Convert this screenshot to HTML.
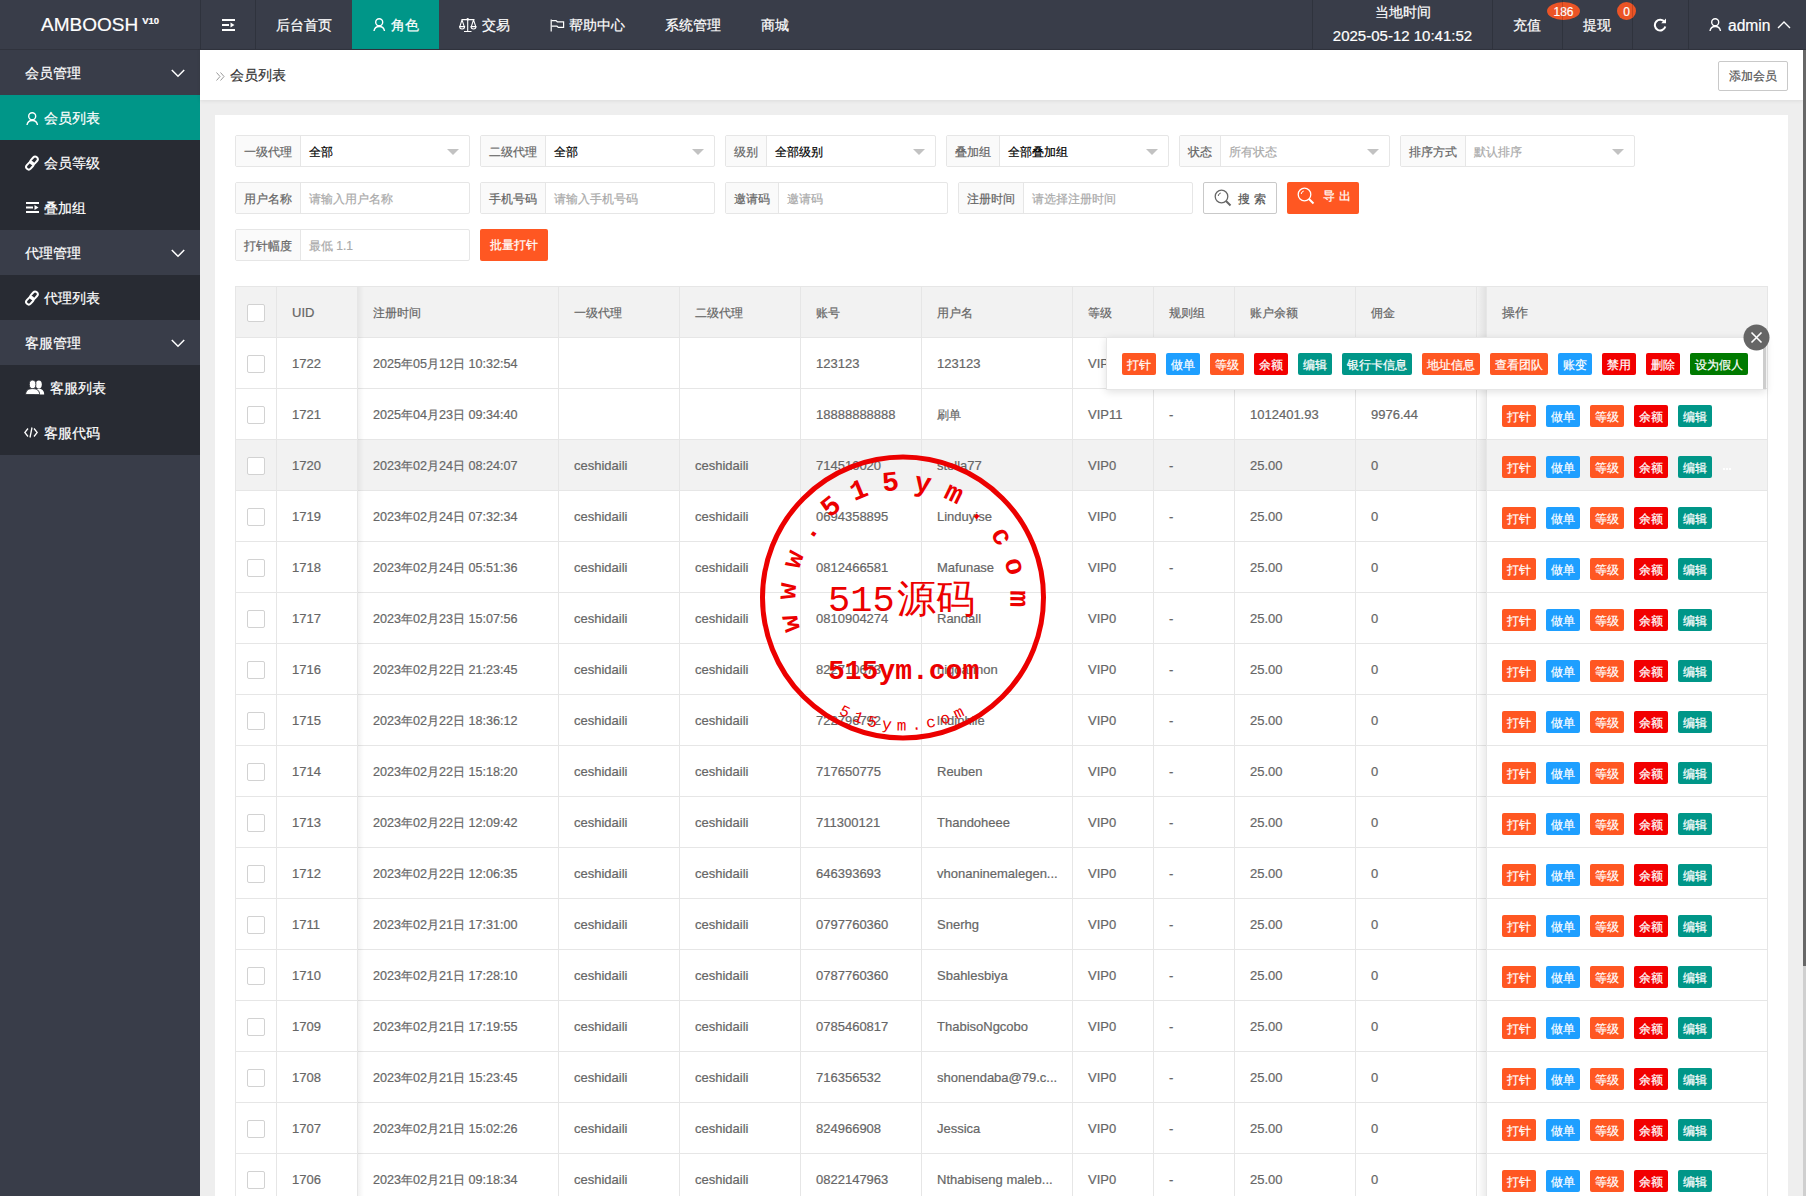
<!DOCTYPE html><html><head><meta charset="utf-8"><style>
*{box-sizing:border-box;margin:0;padding:0}
html,body{width:1806px;height:1196px;overflow:hidden}
body{position:relative;background:#eee;-webkit-text-stroke:0.2px currentColor;font-family:"Liberation Sans",sans-serif;font-size:14px;color:#333}
.abs{position:absolute}
#hdr{left:0;top:0;width:1806px;height:50px;background:#393D49;border-bottom:1px solid #30333d}
.vl{position:absolute;top:0;width:1px;height:49px;background:rgba(0,0,0,.16);z-index:2}
.nav{position:absolute;top:0;height:49px;line-height:51px;color:#fff;font-size:14px;white-space:nowrap}
.nav svg{position:absolute}
#side{left:0;top:50px;width:200px;height:1146px;background:#393D49}
.sp{position:absolute;left:0;width:200px;height:45px;line-height:47px;color:#fff;font-size:14px;padding-left:25px}
.sc{position:absolute;left:0;width:200px;height:45px;line-height:47px;color:#fff;font-size:14px;background:#282B33}
.chev{position:absolute;left:171px;top:19px}
#crumb{left:200px;top:50px;width:1603px;height:50px;background:#fff;box-shadow:0 1px 4px rgba(0,0,0,.08)}
#sb{left:1803px;top:50px;width:3px;height:1146px;background:#cfcfcf}
#sbt{left:1803px;top:50px;width:3px;height:916px;background:#676767}
#card{left:215px;top:115px;width:1573px;height:1100px;background:#fff}
.grp{position:absolute;height:32px;border:1px solid #e6e6e6;border-radius:2px;background:#fff}
.lab{position:absolute;left:0;top:0;height:30px;line-height:32px;padding:0 8px;background:#FAFAFA;border-right:1px solid #e6e6e6;color:#666;font-size:12px;white-space:nowrap}
.inp{position:absolute;top:0;height:30px;line-height:32px;padding-left:8px;font-size:12px;color:#000;white-space:nowrap}
.ph{color:#aaa}
.edge{position:absolute;right:10px;top:13px;width:0;height:0;border-left:6px solid transparent;border-right:6px solid transparent;border-top:6px solid #c2c2c2}
.btn{position:absolute;height:32px;line-height:32px;font-size:12px;text-align:center;border-radius:2px;white-space:nowrap}
#tbl{left:235px;top:286px;width:1533px;height:910px;border:1px solid #e6e6e6;border-bottom:none;overflow:hidden;background:#fff}
.row{position:absolute;left:0;width:1531px;height:51px;border-bottom:1px solid #e6e6e6}
.c{position:absolute;top:0;height:50px;line-height:52px;border-right:1px solid #e6e6e6;padding:0 15px;font-size:13px;color:#666;white-space:nowrap;overflow:hidden}
.cb{position:absolute;left:11px;top:17px;width:18px;height:18px;border:1px solid #d2d2d2;border-radius:2px;background:#fff}
.xb{position:absolute;height:22px;line-height:24px;padding:0 5px;font-size:12px;color:#fff;border-radius:2px;white-space:nowrap;text-align:center}
.o{background:#FF5722}.b{background:#1E9FFF}.r{background:#F20000}.t{background:#009688}.g{background:#007A00}
.z{font-size:12px}
</style></head><body>
<div id="hdr" class="abs">
<div class="abs" style="left:41px;top:0;height:49px;line-height:49px;color:#fff;font-size:19px;white-space:nowrap">AMBOOSH<span style="font-size:9.5px;font-weight:bold;position:relative;top:-7px;left:4px">V10</span></div>
<div class="vl" style="left:200px"></div>
<div class="vl" style="left:255px"></div>
<div class="vl" style="left:1312px"></div>
<div class="vl" style="left:1492px"></div>
<div class="vl" style="left:1562px"></div>
<div class="vl" style="left:1632px"></div>
<div class="vl" style="left:1688px"></div>
<svg class="abs" style="left:222px;top:18px" width="14" height="14" viewBox="0 0 14 14" ><rect x="0" y="1" width="13" height="2" fill="#fff"/><rect x="0" y="6" width="7" height="2" fill="#fff"/><path d="M8.5 4.5 L12.5 7 L8.5 9.5Z" fill="#fff"/><rect x="0" y="11" width="13" height="2" fill="#fff"/></svg>
<div class="nav" style="left:276px">后台首页</div>
<div class="abs" style="left:352px;top:0;width:87px;height:49px;background:#009688"></div>
<svg class="abs" style="left:373px;top:18px" width="13" height="14" viewBox="0 0 13 14" ><circle cx="6.2" cy="4.2" r="3.5" fill="none" stroke="#fff" stroke-width="1.4"/><path d="M1 13 A5.3 5.3 0 0 1 11.5 13" fill="none" stroke="#fff" stroke-width="1.4"/></svg>
<div class="nav" style="left:391px">角色</div>
<svg class="abs" style="left:459px;top:18px" width="18" height="14" viewBox="0 0 18 14" ><g fill="none" stroke="#fff" stroke-width="1.1"><path d="M2.5 1.6H15.5M8.7 1.6V13.2M5 13.5H12.5"/><path d="M3 1.9L0.9 8.4M3 1.9L5.2 8.4M14.5 1.9L12.4 8.4M14.5 1.9L16.7 8.4"/><path d="M0.6 8.6H5.6A2.5 2.4 0 0 1 0.6 8.6Z"/><path d="M12 8.6H17A2.5 2.4 0 0 1 12 8.6Z"/></g><circle cx="8.7" cy="1.3" r="1.2" fill="#fff"/></svg>
<div class="nav" style="left:482px">交易</div>
<svg class="abs" style="left:550px;top:19px" width="15" height="13" viewBox="0 0 15 13" ><g fill="none" stroke="#fff" stroke-width="1.2"><path d="M1.2 0.5V12.5"/><path d="M1.6 1.6H6L7.3 2.8H13.6V8.4H8.3L7 7.2H1.6"/></g></svg>
<div class="nav" style="left:569px">帮助中心</div>
<div class="nav" style="left:665px">系统管理</div>
<div class="nav" style="left:761px">商城</div>
<div class="abs" style="left:1313px;top:0;width:179px;text-align:center;color:#fff;font-size:14px;line-height:24px;top:0">当地时间</div>
<div class="abs" style="left:1313px;top:24px;width:179px;text-align:center;color:#fff;font-size:15px;line-height:24px">2025-05-12 10:41:52</div>
<div class="nav" style="left:1513px;top:0">充值</div>
<div class="abs" style="left:1547px;top:2px;width:33px;height:18px;line-height:20px;border-radius:50%;background:rgba(255,87,34,.9);color:#fff;font-size:12px;text-align:center">186</div>
<div class="nav" style="left:1583px">提现</div>
<div class="abs" style="left:1617px;top:2px;width:19px;height:18px;line-height:20px;border-radius:50%;background:rgba(255,87,34,.9);color:#fff;font-size:12px;text-align:center">0</div>
<svg class="abs" style="left:1653px;top:18px" width="14" height="14" viewBox="0 0 14 14" ><path d="M11.6 4.2A5.3 5.3 0 1 0 12.3 8.5" fill="none" stroke="#fff" stroke-width="2"/><path d="M8.2 5.2H13V0.4Z" fill="#fff"/></svg>
<svg class="abs" style="left:1709px;top:18px" width="13" height="14" viewBox="0 0 13 14" ><circle cx="6.2" cy="4.2" r="3.5" fill="none" stroke="#fff" stroke-width="1.4"/><path d="M1 13 A5.3 5.3 0 0 1 11.5 13" fill="none" stroke="#fff" stroke-width="1.4"/></svg>
<div class="nav" style="left:1728px;font-size:15.6px">admin</div>
<svg class="abs" style="left:1777px;top:20px" width="15" height="9" viewBox="0 0 15 9" ><path d="M1 8L7 2L13 8" fill="none" stroke="#fff" stroke-width="1.4"/></svg>
</div>
<div id="side" class="abs">
<div class="sp" style="top:0px">会员管理<svg class="chev" width="14" height="9" viewBox="0 0 14 9"><path d="M0.8 1L7 7.3L13.2 1" fill="none" stroke="#fff" stroke-width="1.5"/></svg></div>
<div class="sc" style="top:45px;background:#009688"><span style="position:absolute;left:44px">会员列表</span></div>
<svg class="abs" style="left:26px;top:62px" width="13" height="14" viewBox="0 0 13 14" ><circle cx="6.2" cy="4.2" r="3.5" fill="none" stroke="#fff" stroke-width="1.4"/><path d="M1 13 A5.3 5.3 0 0 1 11.5 13" fill="none" stroke="#fff" stroke-width="1.4"/></svg>
<div class="sc" style="top:90px;background:#282B33"><span style="position:absolute;left:44px">会员等级</span></div>
<svg class="abs" style="left:24px;top:105px" width="16" height="16" viewBox="0 0 16 16" ><g fill="none" stroke="#fff" stroke-width="2" transform="rotate(-48 8 8)"><rect x="0.3" y="5.6" width="8.4" height="5.2" rx="2.6"/><rect x="7.1" y="5.2" width="8.4" height="5.2" rx="2.6"/></g></svg>
<div class="sc" style="top:135px;background:#282B33"><span style="position:absolute;left:44px">叠加组</span></div>
<svg class="abs" style="left:26px;top:151px" width="13" height="13" viewBox="0 0 13 13" ><rect x="0" y="1" width="13" height="2" fill="#fff"/><rect x="0" y="5.5" width="7" height="2" fill="#fff"/><path d="M8.5 4L12.5 6.5L8.5 9Z" fill="#fff"/><rect x="0" y="10" width="13" height="2" fill="#fff"/></svg>
<div class="sp" style="top:180px">代理管理<svg class="chev" width="14" height="9" viewBox="0 0 14 9"><path d="M0.8 1L7 7.3L13.2 1" fill="none" stroke="#fff" stroke-width="1.5"/></svg></div>
<div class="sc" style="top:225px;background:#282B33"><span style="position:absolute;left:44px">代理列表</span></div>
<svg class="abs" style="left:24px;top:240px" width="16" height="16" viewBox="0 0 16 16" ><g fill="none" stroke="#fff" stroke-width="2" transform="rotate(-48 8 8)"><rect x="0.3" y="5.6" width="8.4" height="5.2" rx="2.6"/><rect x="7.1" y="5.2" width="8.4" height="5.2" rx="2.6"/></g></svg>
<div class="sp" style="top:270px">客服管理<svg class="chev" width="14" height="9" viewBox="0 0 14 9"><path d="M0.8 1L7 7.3L13.2 1" fill="none" stroke="#fff" stroke-width="1.5"/></svg></div>
<div class="sc" style="top:315px;background:#282B33"><span style="position:absolute;left:50px">客服列表</span></div>
<svg class="abs" style="left:25px;top:330px" width="20" height="16" viewBox="0 0 20 16" ><g fill="#fff"><ellipse cx="13.8" cy="4.6" rx="3" ry="4"/><path d="M9.5 14.5C9.5 10.5 11.5 8.8 14 8.8S19.2 10.5 19.2 14.5Z"/></g><g fill="#fff" stroke="#282B33" stroke-width="0.9"><ellipse cx="7.6" cy="4.4" rx="3.3" ry="4.3"/><path d="M0.6 14.6C0.6 10.6 3.2 8.6 7.6 8.6S14.6 10.6 14.6 14.6Z"/></g></svg>
<div class="sc" style="top:360px;background:#282B33"><span style="position:absolute;left:44px">客服代码</span></div>
<svg class="abs" style="left:24px;top:377px" width="14" height="11" viewBox="0 0 14 11" ><g fill="none" stroke="#fff" stroke-width="1.3"><path d="M4 1.5L0.8 5.5L4 9.5M10 1.5L13.2 5.5L10 9.5M8 0.5L6 10.5"/></g></svg>
</div>
<div id="crumb" class="abs">
<svg class="abs" style="left:16px;top:22px" width="9" height="9" viewBox="0 0 9 9" ><path d="M0.5 0.5L4 4.5L0.5 8.5M4.5 0.5L8 4.5L4.5 8.5" fill="none" stroke="#999" stroke-width="1"/></svg>
<div class="abs" style="left:30px;top:0;line-height:50px;font-size:14px;color:#333">会员列表</div>
<div class="abs" style="left:1518px;top:11px;width:70px;height:30px;line-height:28px;border:1px solid #C9C9C9;border-radius:2px;background:#fff;color:#555;font-size:12px;text-align:center">添加会员</div>
</div>
<div id="sb" class="abs"></div><div id="sbt" class="abs"></div>
<div id="card" class="abs"></div>
<div class="grp" style="left:235px;top:135px;width:235px"><div class="lab" style="width:65px">一级代理</div><div class="inp" style="left:65px">全部</div><i class="edge"></i></div>
<div class="grp" style="left:480px;top:135px;width:235px"><div class="lab" style="width:65px">二级代理</div><div class="inp" style="left:65px">全部</div><i class="edge"></i></div>
<div class="grp" style="left:725px;top:135px;width:211px"><div class="lab" style="width:41px">级别</div><div class="inp" style="left:41px">全部级别</div><i class="edge"></i></div>
<div class="grp" style="left:946px;top:135px;width:223px"><div class="lab" style="width:53px">叠加组</div><div class="inp" style="left:53px">全部叠加组</div><i class="edge"></i></div>
<div class="grp" style="left:1179px;top:135px;width:211px"><div class="lab" style="width:41px">状态</div><div class="inp ph" style="left:41px">所有状态</div><i class="edge"></i></div>
<div class="grp" style="left:1400px;top:135px;width:235px"><div class="lab" style="width:65px">排序方式</div><div class="inp ph" style="left:65px">默认排序</div><i class="edge"></i></div>
<div class="grp" style="left:235px;top:182px;width:235px"><div class="lab" style="width:65px">用户名称</div><div class="inp ph" style="left:65px">请输入用户名称</div></div>
<div class="grp" style="left:480px;top:182px;width:235px"><div class="lab" style="width:65px">手机号码</div><div class="inp ph" style="left:65px">请输入手机号码</div></div>
<div class="grp" style="left:725px;top:182px;width:223px"><div class="lab" style="width:53px">邀请码</div><div class="inp ph" style="left:53px">邀请码</div></div>
<div class="grp" style="left:958px;top:182px;width:235px"><div class="lab" style="width:65px">注册时间</div><div class="inp ph" style="left:65px">请选择注册时间</div></div>
<div class="grp" style="left:235px;top:229px;width:235px"><div class="lab" style="width:65px">打针幅度</div><div class="inp ph" style="left:65px">最低 1.1</div></div>
<div class="btn" style="left:1203px;top:182px;width:74px;border:1px solid #C9C9C9;background:#fff;color:#555"><span style="position:absolute;left:34px;top:0;letter-spacing:4px">搜索</span></div>
<svg class="abs" style="left:1214px;top:189px" width="18" height="18" viewBox="0 0 18 18" ><circle cx="7.5" cy="7.5" r="6.3" fill="none" stroke="#666" stroke-width="1.3"/><path d="M4.2 7A3.4 3.4 0 0 1 6.8 4" fill="none" stroke="#666" stroke-width="1"/><path d="M12 12L16.5 16.5" stroke="#666" stroke-width="2"/></svg>
<div class="btn" style="left:1287px;top:182px;width:72px;background:#FF5722;color:#fff"><span style="position:absolute;left:36px;top:-2px;letter-spacing:4px">导出</span></div>
<svg class="abs" style="left:1297px;top:187px" width="18" height="18" viewBox="0 0 18 18" ><circle cx="7.5" cy="7.5" r="6.3" fill="none" stroke="#fff" stroke-width="1.3"/><path d="M4.2 7A3.4 3.4 0 0 1 6.8 4" fill="none" stroke="#fff" stroke-width="1"/><path d="M12 12L16.5 16.5" stroke="#fff" stroke-width="2"/></svg>
<div class="btn" style="left:480px;top:229px;width:68px;background:#FF5722;color:#fff">批量打针</div>
<div id="tbl" class="abs">
<div class="row" style="top:0px;background:#F2F2F2"><div class="c" style="left:0px;width:41px"><i class="cb"></i></div><div class="c" style="left:41px;width:81px">UID</div><div class="c" style="left:122px;width:201px"><span class="z">注册时间</span></div><div class="c" style="left:323px;width:121px"><span class="z">一级代理</span></div><div class="c" style="left:444px;width:121px"><span class="z">二级代理</span></div><div class="c" style="left:565px;width:121px"><span class="z">账号</span></div><div class="c" style="left:686px;width:151px"><span class="z">用户名</span></div><div class="c" style="left:837px;width:81px"><span class="z">等级</span></div><div class="c" style="left:918px;width:81px"><span class="z">规则组</span></div><div class="c" style="left:999px;width:121px"><span class="z">账户余额</span></div><div class="c" style="left:1120px;width:121px"><span class="z">佣金</span></div><div class="c" style="left:1241px;width:20px;border-right:none"></div></div>
<div class="row" style="top:51px;background:#fff"><div class="c" style="left:0px;width:41px"><i class="cb"></i></div><div class="c" style="left:41px;width:81px">1722</div><div class="c" style="left:122px;width:201px;font-size:12.6px">2025<span class="z">年</span>05<span class="z">月</span>12<span class="z">日</span> 10:32:54</div><div class="c" style="left:323px;width:121px"></div><div class="c" style="left:444px;width:121px"></div><div class="c" style="left:565px;width:121px">123123</div><div class="c" style="left:686px;width:151px">123123</div><div class="c" style="left:837px;width:81px">VIP0</div><div class="c" style="left:918px;width:81px">-</div><div class="c" style="left:999px;width:121px">0.00</div><div class="c" style="left:1120px;width:121px">0</div><div class="c" style="left:1241px;width:20px;border-right:none"></div></div>
<div class="row" style="top:102px;background:#fff"><div class="c" style="left:0px;width:41px"><i class="cb"></i></div><div class="c" style="left:41px;width:81px">1721</div><div class="c" style="left:122px;width:201px;font-size:12.6px">2025<span class="z">年</span>04<span class="z">月</span>23<span class="z">日</span> 09:34:40</div><div class="c" style="left:323px;width:121px"></div><div class="c" style="left:444px;width:121px"></div><div class="c" style="left:565px;width:121px">18888888888</div><div class="c" style="left:686px;width:151px"><span class="z">刷单</span></div><div class="c" style="left:837px;width:81px">VIP11</div><div class="c" style="left:918px;width:81px">-</div><div class="c" style="left:999px;width:121px">1012401.93</div><div class="c" style="left:1120px;width:121px">9976.44</div><div class="c" style="left:1241px;width:20px;border-right:none"></div></div>
<div class="row" style="top:153px;background:#F2F2F2"><div class="c" style="left:0px;width:41px"><i class="cb"></i></div><div class="c" style="left:41px;width:81px">1720</div><div class="c" style="left:122px;width:201px;font-size:12.6px">2023<span class="z">年</span>02<span class="z">月</span>24<span class="z">日</span> 08:24:07</div><div class="c" style="left:323px;width:121px">ceshidaili</div><div class="c" style="left:444px;width:121px">ceshidaili</div><div class="c" style="left:565px;width:121px">714510020</div><div class="c" style="left:686px;width:151px">stella77</div><div class="c" style="left:837px;width:81px">VIP0</div><div class="c" style="left:918px;width:81px">-</div><div class="c" style="left:999px;width:121px">25.00</div><div class="c" style="left:1120px;width:121px">0</div><div class="c" style="left:1241px;width:20px;border-right:none"></div></div>
<div class="row" style="top:204px;background:#fff"><div class="c" style="left:0px;width:41px"><i class="cb"></i></div><div class="c" style="left:41px;width:81px">1719</div><div class="c" style="left:122px;width:201px;font-size:12.6px">2023<span class="z">年</span>02<span class="z">月</span>24<span class="z">日</span> 07:32:34</div><div class="c" style="left:323px;width:121px">ceshidaili</div><div class="c" style="left:444px;width:121px">ceshidaili</div><div class="c" style="left:565px;width:121px">0694358895</div><div class="c" style="left:686px;width:151px">Linduyise</div><div class="c" style="left:837px;width:81px">VIP0</div><div class="c" style="left:918px;width:81px">-</div><div class="c" style="left:999px;width:121px">25.00</div><div class="c" style="left:1120px;width:121px">0</div><div class="c" style="left:1241px;width:20px;border-right:none"></div></div>
<div class="row" style="top:255px;background:#fff"><div class="c" style="left:0px;width:41px"><i class="cb"></i></div><div class="c" style="left:41px;width:81px">1718</div><div class="c" style="left:122px;width:201px;font-size:12.6px">2023<span class="z">年</span>02<span class="z">月</span>24<span class="z">日</span> 05:51:36</div><div class="c" style="left:323px;width:121px">ceshidaili</div><div class="c" style="left:444px;width:121px">ceshidaili</div><div class="c" style="left:565px;width:121px">0812466581</div><div class="c" style="left:686px;width:151px">Mafunase</div><div class="c" style="left:837px;width:81px">VIP0</div><div class="c" style="left:918px;width:81px">-</div><div class="c" style="left:999px;width:121px">25.00</div><div class="c" style="left:1120px;width:121px">0</div><div class="c" style="left:1241px;width:20px;border-right:none"></div></div>
<div class="row" style="top:306px;background:#fff"><div class="c" style="left:0px;width:41px"><i class="cb"></i></div><div class="c" style="left:41px;width:81px">1717</div><div class="c" style="left:122px;width:201px;font-size:12.6px">2023<span class="z">年</span>02<span class="z">月</span>23<span class="z">日</span> 15:07:56</div><div class="c" style="left:323px;width:121px">ceshidaili</div><div class="c" style="left:444px;width:121px">ceshidaili</div><div class="c" style="left:565px;width:121px">0810904274</div><div class="c" style="left:686px;width:151px">Randall</div><div class="c" style="left:837px;width:81px">VIP0</div><div class="c" style="left:918px;width:81px">-</div><div class="c" style="left:999px;width:121px">25.00</div><div class="c" style="left:1120px;width:121px">0</div><div class="c" style="left:1241px;width:20px;border-right:none"></div></div>
<div class="row" style="top:357px;background:#fff"><div class="c" style="left:0px;width:41px"><i class="cb"></i></div><div class="c" style="left:41px;width:81px">1716</div><div class="c" style="left:122px;width:201px;font-size:12.6px">2023<span class="z">年</span>02<span class="z">月</span>22<span class="z">日</span> 21:23:45</div><div class="c" style="left:323px;width:121px">ceshidaili</div><div class="c" style="left:444px;width:121px">ceshidaili</div><div class="c" style="left:565px;width:121px">822710673</div><div class="c" style="left:686px;width:151px">nigoannon</div><div class="c" style="left:837px;width:81px">VIP0</div><div class="c" style="left:918px;width:81px">-</div><div class="c" style="left:999px;width:121px">25.00</div><div class="c" style="left:1120px;width:121px">0</div><div class="c" style="left:1241px;width:20px;border-right:none"></div></div>
<div class="row" style="top:408px;background:#fff"><div class="c" style="left:0px;width:41px"><i class="cb"></i></div><div class="c" style="left:41px;width:81px">1715</div><div class="c" style="left:122px;width:201px;font-size:12.6px">2023<span class="z">年</span>02<span class="z">月</span>22<span class="z">日</span> 18:36:12</div><div class="c" style="left:323px;width:121px">ceshidaili</div><div class="c" style="left:444px;width:121px">ceshidaili</div><div class="c" style="left:565px;width:121px">722796792</div><div class="c" style="left:686px;width:151px">lndiphile</div><div class="c" style="left:837px;width:81px">VIP0</div><div class="c" style="left:918px;width:81px">-</div><div class="c" style="left:999px;width:121px">25.00</div><div class="c" style="left:1120px;width:121px">0</div><div class="c" style="left:1241px;width:20px;border-right:none"></div></div>
<div class="row" style="top:459px;background:#fff"><div class="c" style="left:0px;width:41px"><i class="cb"></i></div><div class="c" style="left:41px;width:81px">1714</div><div class="c" style="left:122px;width:201px;font-size:12.6px">2023<span class="z">年</span>02<span class="z">月</span>22<span class="z">日</span> 15:18:20</div><div class="c" style="left:323px;width:121px">ceshidaili</div><div class="c" style="left:444px;width:121px">ceshidaili</div><div class="c" style="left:565px;width:121px">717650775</div><div class="c" style="left:686px;width:151px">Reuben</div><div class="c" style="left:837px;width:81px">VIP0</div><div class="c" style="left:918px;width:81px">-</div><div class="c" style="left:999px;width:121px">25.00</div><div class="c" style="left:1120px;width:121px">0</div><div class="c" style="left:1241px;width:20px;border-right:none"></div></div>
<div class="row" style="top:510px;background:#fff"><div class="c" style="left:0px;width:41px"><i class="cb"></i></div><div class="c" style="left:41px;width:81px">1713</div><div class="c" style="left:122px;width:201px;font-size:12.6px">2023<span class="z">年</span>02<span class="z">月</span>22<span class="z">日</span> 12:09:42</div><div class="c" style="left:323px;width:121px">ceshidaili</div><div class="c" style="left:444px;width:121px">ceshidaili</div><div class="c" style="left:565px;width:121px">711300121</div><div class="c" style="left:686px;width:151px">Thandoheee</div><div class="c" style="left:837px;width:81px">VIP0</div><div class="c" style="left:918px;width:81px">-</div><div class="c" style="left:999px;width:121px">25.00</div><div class="c" style="left:1120px;width:121px">0</div><div class="c" style="left:1241px;width:20px;border-right:none"></div></div>
<div class="row" style="top:561px;background:#fff"><div class="c" style="left:0px;width:41px"><i class="cb"></i></div><div class="c" style="left:41px;width:81px">1712</div><div class="c" style="left:122px;width:201px;font-size:12.6px">2023<span class="z">年</span>02<span class="z">月</span>22<span class="z">日</span> 12:06:35</div><div class="c" style="left:323px;width:121px">ceshidaili</div><div class="c" style="left:444px;width:121px">ceshidaili</div><div class="c" style="left:565px;width:121px">646393693</div><div class="c" style="left:686px;width:151px">vhonaninemalegen...</div><div class="c" style="left:837px;width:81px">VIP0</div><div class="c" style="left:918px;width:81px">-</div><div class="c" style="left:999px;width:121px">25.00</div><div class="c" style="left:1120px;width:121px">0</div><div class="c" style="left:1241px;width:20px;border-right:none"></div></div>
<div class="row" style="top:612px;background:#fff"><div class="c" style="left:0px;width:41px"><i class="cb"></i></div><div class="c" style="left:41px;width:81px">1711</div><div class="c" style="left:122px;width:201px;font-size:12.6px">2023<span class="z">年</span>02<span class="z">月</span>21<span class="z">日</span> 17:31:00</div><div class="c" style="left:323px;width:121px">ceshidaili</div><div class="c" style="left:444px;width:121px">ceshidaili</div><div class="c" style="left:565px;width:121px">0797760360</div><div class="c" style="left:686px;width:151px">Snerhg</div><div class="c" style="left:837px;width:81px">VIP0</div><div class="c" style="left:918px;width:81px">-</div><div class="c" style="left:999px;width:121px">25.00</div><div class="c" style="left:1120px;width:121px">0</div><div class="c" style="left:1241px;width:20px;border-right:none"></div></div>
<div class="row" style="top:663px;background:#fff"><div class="c" style="left:0px;width:41px"><i class="cb"></i></div><div class="c" style="left:41px;width:81px">1710</div><div class="c" style="left:122px;width:201px;font-size:12.6px">2023<span class="z">年</span>02<span class="z">月</span>21<span class="z">日</span> 17:28:10</div><div class="c" style="left:323px;width:121px">ceshidaili</div><div class="c" style="left:444px;width:121px">ceshidaili</div><div class="c" style="left:565px;width:121px">0787760360</div><div class="c" style="left:686px;width:151px">Sbahlesbiya</div><div class="c" style="left:837px;width:81px">VIP0</div><div class="c" style="left:918px;width:81px">-</div><div class="c" style="left:999px;width:121px">25.00</div><div class="c" style="left:1120px;width:121px">0</div><div class="c" style="left:1241px;width:20px;border-right:none"></div></div>
<div class="row" style="top:714px;background:#fff"><div class="c" style="left:0px;width:41px"><i class="cb"></i></div><div class="c" style="left:41px;width:81px">1709</div><div class="c" style="left:122px;width:201px;font-size:12.6px">2023<span class="z">年</span>02<span class="z">月</span>21<span class="z">日</span> 17:19:55</div><div class="c" style="left:323px;width:121px">ceshidaili</div><div class="c" style="left:444px;width:121px">ceshidaili</div><div class="c" style="left:565px;width:121px">0785460817</div><div class="c" style="left:686px;width:151px">ThabisoNgcobo</div><div class="c" style="left:837px;width:81px">VIP0</div><div class="c" style="left:918px;width:81px">-</div><div class="c" style="left:999px;width:121px">25.00</div><div class="c" style="left:1120px;width:121px">0</div><div class="c" style="left:1241px;width:20px;border-right:none"></div></div>
<div class="row" style="top:765px;background:#fff"><div class="c" style="left:0px;width:41px"><i class="cb"></i></div><div class="c" style="left:41px;width:81px">1708</div><div class="c" style="left:122px;width:201px;font-size:12.6px">2023<span class="z">年</span>02<span class="z">月</span>21<span class="z">日</span> 15:23:45</div><div class="c" style="left:323px;width:121px">ceshidaili</div><div class="c" style="left:444px;width:121px">ceshidaili</div><div class="c" style="left:565px;width:121px">716356532</div><div class="c" style="left:686px;width:151px">shonendaba@79.c...</div><div class="c" style="left:837px;width:81px">VIP0</div><div class="c" style="left:918px;width:81px">-</div><div class="c" style="left:999px;width:121px">25.00</div><div class="c" style="left:1120px;width:121px">0</div><div class="c" style="left:1241px;width:20px;border-right:none"></div></div>
<div class="row" style="top:816px;background:#fff"><div class="c" style="left:0px;width:41px"><i class="cb"></i></div><div class="c" style="left:41px;width:81px">1707</div><div class="c" style="left:122px;width:201px;font-size:12.6px">2023<span class="z">年</span>02<span class="z">月</span>21<span class="z">日</span> 15:02:26</div><div class="c" style="left:323px;width:121px">ceshidaili</div><div class="c" style="left:444px;width:121px">ceshidaili</div><div class="c" style="left:565px;width:121px">824966908</div><div class="c" style="left:686px;width:151px">Jessica</div><div class="c" style="left:837px;width:81px">VIP0</div><div class="c" style="left:918px;width:81px">-</div><div class="c" style="left:999px;width:121px">25.00</div><div class="c" style="left:1120px;width:121px">0</div><div class="c" style="left:1241px;width:20px;border-right:none"></div></div>
<div class="row" style="top:867px;background:#fff"><div class="c" style="left:0px;width:41px"><i class="cb"></i></div><div class="c" style="left:41px;width:81px">1706</div><div class="c" style="left:122px;width:201px;font-size:12.6px">2023<span class="z">年</span>02<span class="z">月</span>21<span class="z">日</span> 09:18:34</div><div class="c" style="left:323px;width:121px">ceshidaili</div><div class="c" style="left:444px;width:121px">ceshidaili</div><div class="c" style="left:565px;width:121px">0822147963</div><div class="c" style="left:686px;width:151px">Nthabiseng maleb...</div><div class="c" style="left:837px;width:81px">VIP0</div><div class="c" style="left:918px;width:81px">-</div><div class="c" style="left:999px;width:121px">25.00</div><div class="c" style="left:1120px;width:121px">0</div><div class="c" style="left:1241px;width:20px;border-right:none"></div></div>
<div class="abs" style="left:122px;top:0;width:6px;height:910px;background:linear-gradient(to right,rgba(0,0,0,.05),rgba(0,0,0,0))"></div>
<div class="abs" style="left:1241px;top:0;width:9px;height:910px;background:linear-gradient(to left,rgba(0,0,0,.07),rgba(0,0,0,0))"></div>
<div class="abs" style="left:1250px;top:0;width:281px;height:910px;border-left:1px solid #e6e6e6;background:#fff">
<div class="c" style="left:0;top:0;width:280px;height:50px;border-right:none;border-bottom:1px solid #e6e6e6;background:#F2F2F2;height:51px">操作</div>
<div class="abs" style="left:0;top:51px;width:280px;height:51px;border-bottom:1px solid #e6e6e6;background:#fff"><span class="xb o" style="left:15px;top:16px;width:34px">打针</span><span class="xb b" style="left:59px;top:16px;width:34px">做单</span><span class="xb o" style="left:103px;top:16px;width:34px">等级</span><span class="xb r" style="left:147px;top:16px;width:34px">余额</span><span class="xb t" style="left:191px;top:16px;width:34px">编辑</span></div>
<div class="abs" style="left:0;top:102px;width:280px;height:51px;border-bottom:1px solid #e6e6e6;background:#fff"><span class="xb o" style="left:15px;top:16px;width:34px">打针</span><span class="xb b" style="left:59px;top:16px;width:34px">做单</span><span class="xb o" style="left:103px;top:16px;width:34px">等级</span><span class="xb r" style="left:147px;top:16px;width:34px">余额</span><span class="xb t" style="left:191px;top:16px;width:34px">编辑</span></div>
<div class="abs" style="left:0;top:153px;width:280px;height:51px;border-bottom:1px solid #e6e6e6;background:#F2F2F2"><span class="xb o" style="left:15px;top:16px;width:34px">打针</span><span class="xb b" style="left:59px;top:16px;width:34px">做单</span><span class="xb o" style="left:103px;top:16px;width:34px">等级</span><span class="xb r" style="left:147px;top:16px;width:34px">余额</span><span class="xb t" style="left:191px;top:16px;width:34px">编辑</span><i class="abs" style="left:236.0px;top:28px;width:2px;height:2px;background:#fff"></i><i class="abs" style="left:239.2px;top:28px;width:2px;height:2px;background:#fff"></i><i class="abs" style="left:242.4px;top:28px;width:2px;height:2px;background:#fff"></i></div>
<div class="abs" style="left:0;top:204px;width:280px;height:51px;border-bottom:1px solid #e6e6e6;background:#fff"><span class="xb o" style="left:15px;top:16px;width:34px">打针</span><span class="xb b" style="left:59px;top:16px;width:34px">做单</span><span class="xb o" style="left:103px;top:16px;width:34px">等级</span><span class="xb r" style="left:147px;top:16px;width:34px">余额</span><span class="xb t" style="left:191px;top:16px;width:34px">编辑</span></div>
<div class="abs" style="left:0;top:255px;width:280px;height:51px;border-bottom:1px solid #e6e6e6;background:#fff"><span class="xb o" style="left:15px;top:16px;width:34px">打针</span><span class="xb b" style="left:59px;top:16px;width:34px">做单</span><span class="xb o" style="left:103px;top:16px;width:34px">等级</span><span class="xb r" style="left:147px;top:16px;width:34px">余额</span><span class="xb t" style="left:191px;top:16px;width:34px">编辑</span></div>
<div class="abs" style="left:0;top:306px;width:280px;height:51px;border-bottom:1px solid #e6e6e6;background:#fff"><span class="xb o" style="left:15px;top:16px;width:34px">打针</span><span class="xb b" style="left:59px;top:16px;width:34px">做单</span><span class="xb o" style="left:103px;top:16px;width:34px">等级</span><span class="xb r" style="left:147px;top:16px;width:34px">余额</span><span class="xb t" style="left:191px;top:16px;width:34px">编辑</span></div>
<div class="abs" style="left:0;top:357px;width:280px;height:51px;border-bottom:1px solid #e6e6e6;background:#fff"><span class="xb o" style="left:15px;top:16px;width:34px">打针</span><span class="xb b" style="left:59px;top:16px;width:34px">做单</span><span class="xb o" style="left:103px;top:16px;width:34px">等级</span><span class="xb r" style="left:147px;top:16px;width:34px">余额</span><span class="xb t" style="left:191px;top:16px;width:34px">编辑</span></div>
<div class="abs" style="left:0;top:408px;width:280px;height:51px;border-bottom:1px solid #e6e6e6;background:#fff"><span class="xb o" style="left:15px;top:16px;width:34px">打针</span><span class="xb b" style="left:59px;top:16px;width:34px">做单</span><span class="xb o" style="left:103px;top:16px;width:34px">等级</span><span class="xb r" style="left:147px;top:16px;width:34px">余额</span><span class="xb t" style="left:191px;top:16px;width:34px">编辑</span></div>
<div class="abs" style="left:0;top:459px;width:280px;height:51px;border-bottom:1px solid #e6e6e6;background:#fff"><span class="xb o" style="left:15px;top:16px;width:34px">打针</span><span class="xb b" style="left:59px;top:16px;width:34px">做单</span><span class="xb o" style="left:103px;top:16px;width:34px">等级</span><span class="xb r" style="left:147px;top:16px;width:34px">余额</span><span class="xb t" style="left:191px;top:16px;width:34px">编辑</span></div>
<div class="abs" style="left:0;top:510px;width:280px;height:51px;border-bottom:1px solid #e6e6e6;background:#fff"><span class="xb o" style="left:15px;top:16px;width:34px">打针</span><span class="xb b" style="left:59px;top:16px;width:34px">做单</span><span class="xb o" style="left:103px;top:16px;width:34px">等级</span><span class="xb r" style="left:147px;top:16px;width:34px">余额</span><span class="xb t" style="left:191px;top:16px;width:34px">编辑</span></div>
<div class="abs" style="left:0;top:561px;width:280px;height:51px;border-bottom:1px solid #e6e6e6;background:#fff"><span class="xb o" style="left:15px;top:16px;width:34px">打针</span><span class="xb b" style="left:59px;top:16px;width:34px">做单</span><span class="xb o" style="left:103px;top:16px;width:34px">等级</span><span class="xb r" style="left:147px;top:16px;width:34px">余额</span><span class="xb t" style="left:191px;top:16px;width:34px">编辑</span></div>
<div class="abs" style="left:0;top:612px;width:280px;height:51px;border-bottom:1px solid #e6e6e6;background:#fff"><span class="xb o" style="left:15px;top:16px;width:34px">打针</span><span class="xb b" style="left:59px;top:16px;width:34px">做单</span><span class="xb o" style="left:103px;top:16px;width:34px">等级</span><span class="xb r" style="left:147px;top:16px;width:34px">余额</span><span class="xb t" style="left:191px;top:16px;width:34px">编辑</span></div>
<div class="abs" style="left:0;top:663px;width:280px;height:51px;border-bottom:1px solid #e6e6e6;background:#fff"><span class="xb o" style="left:15px;top:16px;width:34px">打针</span><span class="xb b" style="left:59px;top:16px;width:34px">做单</span><span class="xb o" style="left:103px;top:16px;width:34px">等级</span><span class="xb r" style="left:147px;top:16px;width:34px">余额</span><span class="xb t" style="left:191px;top:16px;width:34px">编辑</span></div>
<div class="abs" style="left:0;top:714px;width:280px;height:51px;border-bottom:1px solid #e6e6e6;background:#fff"><span class="xb o" style="left:15px;top:16px;width:34px">打针</span><span class="xb b" style="left:59px;top:16px;width:34px">做单</span><span class="xb o" style="left:103px;top:16px;width:34px">等级</span><span class="xb r" style="left:147px;top:16px;width:34px">余额</span><span class="xb t" style="left:191px;top:16px;width:34px">编辑</span></div>
<div class="abs" style="left:0;top:765px;width:280px;height:51px;border-bottom:1px solid #e6e6e6;background:#fff"><span class="xb o" style="left:15px;top:16px;width:34px">打针</span><span class="xb b" style="left:59px;top:16px;width:34px">做单</span><span class="xb o" style="left:103px;top:16px;width:34px">等级</span><span class="xb r" style="left:147px;top:16px;width:34px">余额</span><span class="xb t" style="left:191px;top:16px;width:34px">编辑</span></div>
<div class="abs" style="left:0;top:816px;width:280px;height:51px;border-bottom:1px solid #e6e6e6;background:#fff"><span class="xb o" style="left:15px;top:16px;width:34px">打针</span><span class="xb b" style="left:59px;top:16px;width:34px">做单</span><span class="xb o" style="left:103px;top:16px;width:34px">等级</span><span class="xb r" style="left:147px;top:16px;width:34px">余额</span><span class="xb t" style="left:191px;top:16px;width:34px">编辑</span></div>
<div class="abs" style="left:0;top:867px;width:280px;height:51px;border-bottom:1px solid #e6e6e6;background:#fff"><span class="xb o" style="left:15px;top:16px;width:34px">打针</span><span class="xb b" style="left:59px;top:16px;width:34px">做单</span><span class="xb o" style="left:103px;top:16px;width:34px">等级</span><span class="xb r" style="left:147px;top:16px;width:34px">余额</span><span class="xb t" style="left:191px;top:16px;width:34px">编辑</span></div>
</div>
</div>
<div class="abs" style="left:1106px;top:337px;width:660px;height:53px;border:1px solid #e6e6e6;background:#fff;box-shadow:0 2px 8px rgba(0,0,0,.12)">
<span class="xb o" style="left:15px;top:15px;width:34px">打针</span>
<span class="xb b" style="left:59px;top:15px;width:34px">做单</span>
<span class="xb o" style="left:103px;top:15px;width:34px">等级</span>
<span class="xb r" style="left:147px;top:15px;width:34px">余额</span>
<span class="xb t" style="left:191px;top:15px;width:34px">编辑</span>
<span class="xb t" style="left:235px;top:15px;width:70px">银行卡信息</span>
<span class="xb o" style="left:315px;top:15px;width:58px">地址信息</span>
<span class="xb o" style="left:383px;top:15px;width:58px">查看团队</span>
<span class="xb b" style="left:451px;top:15px;width:34px">账变</span>
<span class="xb r" style="left:495px;top:15px;width:34px">禁用</span>
<span class="xb r" style="left:539px;top:15px;width:34px">删除</span>
<span class="xb g" style="left:583px;top:15px;width:58px">设为假人</span>
<div class="abs" style="left:656px;top:7px;width:3px;height:44px;background:#cdcdcd"></div>
</div>
<svg class="abs" style="left:1743px;top:324px" width="27" height="27" viewBox="0 0 27 27" ><circle cx="13.5" cy="13.5" r="13" fill="#666"/><path d="M8.5 8.5L18.5 18.5M18.5 8.5L8.5 18.5" stroke="#fff" stroke-width="1.6"/></svg>
<svg class="abs" style="left:0;top:0;-webkit-text-stroke:0" width="1806" height="1196" viewBox="0 0 1806 1196"><circle cx="903" cy="597.5" r="140.5" fill="none" stroke="#EC0000" stroke-width="5"/><text x="903" y="490.0" transform="rotate(-103.00 903 597.5)" text-anchor="middle" font-size="28" font-weight="bold" font-family="Liberation Mono" fill="#EC0000">w</text><text x="903" y="490.0" transform="rotate(-86.87 903 597.5)" text-anchor="middle" font-size="28" font-weight="bold" font-family="Liberation Mono" fill="#EC0000">w</text><text x="903" y="490.0" transform="rotate(-70.74 903 597.5)" text-anchor="middle" font-size="28" font-weight="bold" font-family="Liberation Mono" fill="#EC0000">w</text><text x="903" y="490.0" transform="rotate(-54.61 903 597.5)" text-anchor="middle" font-size="28" font-weight="bold" font-family="Liberation Mono" fill="#EC0000">.</text><text x="903" y="490.0" transform="rotate(-38.48 903 597.5)" text-anchor="middle" font-size="28" font-weight="bold" font-family="Liberation Mono" fill="#EC0000">5</text><text x="903" y="490.0" transform="rotate(-22.35 903 597.5)" text-anchor="middle" font-size="28" font-weight="bold" font-family="Liberation Mono" fill="#EC0000">1</text><text x="903" y="490.0" transform="rotate(-6.22 903 597.5)" text-anchor="middle" font-size="28" font-weight="bold" font-family="Liberation Mono" fill="#EC0000">5</text><text x="903" y="490.0" transform="rotate(9.91 903 597.5)" text-anchor="middle" font-size="28" font-weight="bold" font-family="Liberation Mono" fill="#EC0000">y</text><text x="903" y="490.0" transform="rotate(26.04 903 597.5)" text-anchor="middle" font-size="28" font-weight="bold" font-family="Liberation Mono" fill="#EC0000">m</text><text x="903" y="490.0" transform="rotate(42.17 903 597.5)" text-anchor="middle" font-size="28" font-weight="bold" font-family="Liberation Mono" fill="#EC0000">.</text><text x="903" y="490.0" transform="rotate(58.30 903 597.5)" text-anchor="middle" font-size="28" font-weight="bold" font-family="Liberation Mono" fill="#EC0000">c</text><text x="903" y="490.0" transform="rotate(74.43 903 597.5)" text-anchor="middle" font-size="28" font-weight="bold" font-family="Liberation Mono" fill="#EC0000">o</text><text x="903" y="490.0" transform="rotate(90.56 903 597.5)" text-anchor="middle" font-size="28" font-weight="bold" font-family="Liberation Mono" fill="#EC0000">m</text><text x="828" y="611" font-size="37" font-family="Liberation Mono" fill="#EC0000">515</text><text x="897" y="612" font-size="39" font-family="Liberation Sans" fill="#EC0000">源码</text><text x="828" y="678.5" font-size="28" font-weight="bold" font-family="Liberation Mono" fill="#EC0000">515ym.com</text><text x="903" y="730.5" transform="rotate(27.00 903 597.5)" text-anchor="middle" font-size="16" font-family="Liberation Mono" fill="#EC0000">5</text><text x="903" y="730.5" transform="rotate(20.40 903 597.5)" text-anchor="middle" font-size="16" font-family="Liberation Mono" fill="#EC0000">1</text><text x="903" y="730.5" transform="rotate(13.80 903 597.5)" text-anchor="middle" font-size="16" font-family="Liberation Mono" fill="#EC0000">5</text><text x="903" y="730.5" transform="rotate(7.20 903 597.5)" text-anchor="middle" font-size="16" font-family="Liberation Mono" fill="#EC0000">y</text><text x="903" y="730.5" transform="rotate(0.60 903 597.5)" text-anchor="middle" font-size="16" font-family="Liberation Mono" fill="#EC0000">m</text><text x="903" y="730.5" transform="rotate(-6.00 903 597.5)" text-anchor="middle" font-size="16" font-family="Liberation Mono" fill="#EC0000">.</text><text x="903" y="730.5" transform="rotate(-12.60 903 597.5)" text-anchor="middle" font-size="16" font-family="Liberation Mono" fill="#EC0000">c</text><text x="903" y="730.5" transform="rotate(-19.20 903 597.5)" text-anchor="middle" font-size="16" font-family="Liberation Mono" fill="#EC0000">o</text><text x="903" y="730.5" transform="rotate(-25.80 903 597.5)" text-anchor="middle" font-size="16" font-family="Liberation Mono" fill="#EC0000">m</text></svg>
</body></html>
